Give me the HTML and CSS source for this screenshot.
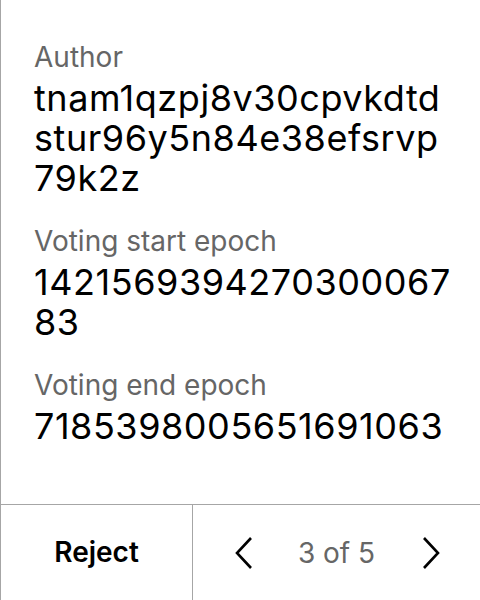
FILE: index.html
```html
<!DOCTYPE html>
<html>
<head>
<meta charset="utf-8">
<link rel="stylesheet" href="styles.css">
</head>
<body>
<div class="screen">
  <main class="content">
    <section class="field">
      <div class="label">Author</div>
      <div class="value">tnam1qzpj8v30cpvkdtd<br>stur96y5n84e38efsrvp<br>79k2z</div>
    </section>
    <section class="field">
      <div class="label">Voting start epoch</div>
      <div class="value">1421569394270300067<br>83</div>
    </section>
    <section class="field">
      <div class="label">Voting end epoch</div>
      <div class="value">7185398005651691063</div>
    </section>
  </main>
  <footer class="footer">
    <div class="reject">Reject</div>
    <div class="nav">
      <svg class="chev" width="18" height="34" viewBox="0 0 18 34"><polyline points="16,2 2,17 16,32" fill="none" stroke="#000" stroke-width="2.6"/></svg>
      <span class="page">3 of 5</span>
      <svg class="chev" width="18" height="34" viewBox="0 0 18 34"><polyline points="2,2 16,17 2,32" fill="none" stroke="#000" stroke-width="2.6"/></svg>
    </div>
  </footer>
</div>
</body>
</html>
```
FILE: styles.css
```css
* { box-sizing: border-box; }
html, body { margin: 0; padding: 0; background: #fff; }
body { font-family: Inter, "Noto Sans", sans-serif; color: #000; }
.screen {
  width: 480px;
  height: 600px;
  border-left: 1px solid #a6a6a6;
  display: flex;
  flex-direction: column;
}
.content {
  flex: 1;
  padding: 39px 0 0 33px;
  display: flex;
  flex-direction: column;
  gap: 25px;
}
.label {
  font-size: 28px;
  line-height: 36px;
  color: #666;
}
.value {
  font-size: 36px;
  line-height: 40px;
  font-weight: 400;
  letter-spacing: 0.55px;
  margin-top: 3px;
}
.footer {
  height: 96px;
  border-top: 1px solid #a6a6a6;
  display: flex;
}
.reject {
  width: 192px;
  border-right: 1px solid #a6a6a6;
  display: flex;
  align-items: center;
  justify-content: center;
  font-size: 28px;
  font-weight: 600;
  padding-bottom: 2px;
}
.nav {
  flex: 1;
  display: flex;
  align-items: center;
  justify-content: center;
  padding-left: 2px;
}
.page {
  font-size: 28px;
  color: #666;
  margin: 0 47px 0 45px;
}
```
